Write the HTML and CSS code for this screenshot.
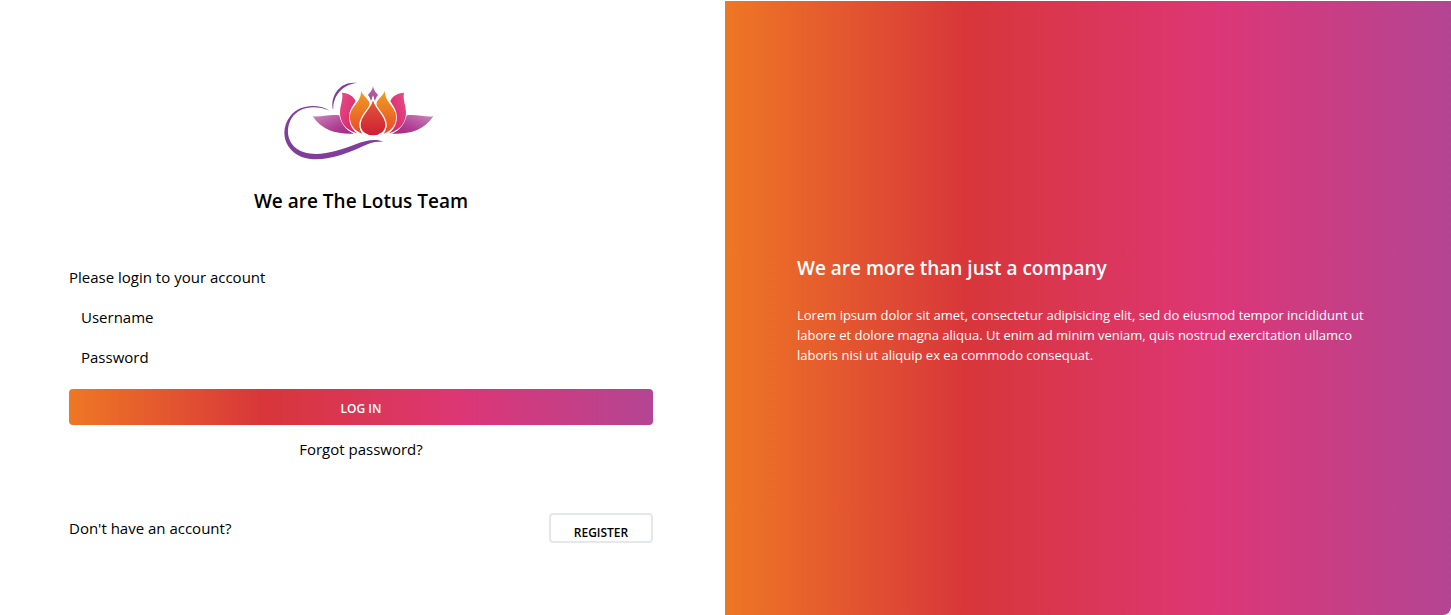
FILE: index.html
```html
<!DOCTYPE html>
<html lang="en">
<head>
<meta charset="utf-8">
<meta name="viewport" content="width=device-width, initial-scale=1">
<title>The Lotus Team</title>
<link rel="stylesheet" href="styles.css">
</head>
<body>
<main class="card">
  <section class="login">
    <header class="brand">
      <svg class="logo" viewBox="23 15 465 240" role="img" aria-label="Lotus">
        <defs>
          <linearGradient id="leaf" x1="0" y1="0" x2="1" y2="1"><stop offset="0" stop-color="#c987bd"/><stop offset=".6" stop-color="#b04094"/><stop offset="1" stop-color="#a5237f"/></linearGradient>
          <linearGradient id="pink" x1="0" y1="0" x2="1" y2="1"><stop offset="0" stop-color="#e2508a"/><stop offset="1" stop-color="#dc1c62"/></linearGradient>
          <linearGradient id="orange" x1="0" y1="0" x2="0" y2="1"><stop offset="0" stop-color="#f0a020"/><stop offset="1" stop-color="#e8492a"/></linearGradient>
          <linearGradient id="red" x1="0" y1="0" x2="0" y2="1"><stop offset="0" stop-color="#e26038"/><stop offset="1" stop-color="#d01c34"/></linearGradient>
          <linearGradient id="bud" x1="0" y1="0" x2="0" y2="1"><stop offset="0" stop-color="#bf68a9"/><stop offset="1" stop-color="#9a4b9b"/></linearGradient>
          <g id="side">
            <path fill="url(#leaf)" d="M109 121C136 124 156 114 189 118C194 144 210 164 233 173C181 175 137 164 109 121Z"/>
            <path fill="url(#pink)" d="M197 50C217 51 231 60 238 75C232 87 221 98 219 116C216 138 225 158 242 172C209 162 190 140 191 108C192 84 201 72 197 50Z"/>
            <path fill="url(#orange)" d="M254 44C258 57 273 66 279 79C281 89 280 96 272 106C259 122 250 132 250 148C250 158 253 166 258 173C235 165 219 146 221 120C223 90 256 78 254 44Z"/>
          </g>
        </defs>
        <g fill="#803d9b">
          <path d="M160 104C119 80 66 89 42 120C8 164 24 223 76 243C130 261 193 240 240 220C269 206 291 195 324 197C294 187 267 194 238 205C191 223 130 244 83 229C33 213 24 163 46 126C67 93 114 84 160 104Z"/>
          <path d="M169 98C162 58 193 14 242 21C198 25 170 61 171 98Z"/>
        </g>
        <path fill="url(#bud)" d="M290 30C293 46 300 49 305 57C300 63 297 69 296 77L290 58L284 77C283 69 280 63 275 57C280 49 287 46 290 30Z"/>
        <use href="#side"/>
        <use href="#side" transform="translate(580 0) scale(-1 1)"/>
        <path fill="url(#red)" stroke="#fff" stroke-width="4" d="M290 62C292 98 329 113 329 146C329 168 311 180 290 180C269 180 251 168 251 146C251 113 288 98 290 62Z"/>
      </svg>
      <h1 class="heading">We are The Lotus Team</h1>
    </header>
    <form class="form">
      <p class="intro">Please login to your account</p>
      <input class="field" type="text" placeholder="Username" aria-label="Username">
      <input class="field" type="password" placeholder="Password" aria-label="Password">
      <button class="submit" type="submit">LOG IN</button>
      <a class="forgot" href="#">Forgot password?</a>
    </form>
    <div class="signup">
      <p>Don't have an account?</p>
      <button class="register" type="button">REGISTER</button>
    </div>
  </section>
  <section class="about">
    <h2 class="heading">We are more than just a company</h2>
    <p class="about-text">Lorem ipsum dolor sit amet, consectetur adipisicing elit, sed do eiusmod tempor incididunt ut labore et dolore magna aliqua. Ut enim ad minim veniam, quis nostrud exercitation ullamco laboris nisi ut aliquip ex ea commodo consequat.</p>
  </section>
</main>
</body>
</html>
```
FILE: styles.css
```css
:root {
  --brand: linear-gradient(to right, #ee7724, #d8363a, #dd3675, #b44593);
}

* { box-sizing: border-box; }

body {
  margin: 0;
  padding-top: 1px;
  background: #fff;
  color: #000;
  font: 15px/24px "Open Sans", "Noto Sans", sans-serif;
}

h1, h2, p { margin: 0; }

button, input { font: inherit; color: inherit; }

.card {
  display: grid;
  grid-template-columns: 725fr 726fr;
  min-height: calc(100vh - 1px);
}

.login {
  display: flex;
  flex-direction: column;
  padding: 80px 72px 72px 69px;
}

.brand {
  display: flex;
  flex-direction: column;
  align-items: center;
  gap: 24px;
}

.logo {
  width: 155px;
  height: 80px;
}

.heading {
  padding-top: 2px;
  font-size: 19px;
  line-height: 28px;
  font-weight: 600;
}

.form {
  display: flex;
  flex-direction: column;
  margin-top: 50px;
}

.field {
  width: 100%;
  height: 24px;
  margin-top: 16px;
  padding: 0 12px;
  border: 0;
  background: transparent;
}

.field::placeholder {
  color: #000;
  opacity: 1;
}

.submit {
  height: 36px;
  margin-top: 20px;
  padding: 3px 24px 0;
  border: 0;
  border-radius: 4px;
  background: var(--brand);
  color: #fff;
  font-size: 12px;
  font-weight: 600;
}

.forgot {
  align-self: center;
  margin-top: 12px;
  color: inherit;
  text-decoration: none;
}

.signup {
  display: flex;
  align-items: center;
  justify-content: space-between;
  margin-top: 52px;
}

.register {
  width: 104px;
  height: 30px;
  padding: 9px 0 0;
  border: 2px solid #e5e7eb;
  border-radius: 4px;
  background: #fff;
  font-size: 12px;
  line-height: 16px;
  font-weight: 600;
}

.about {
  display: flex;
  flex-direction: column;
  justify-content: center;
  gap: 23px;
  padding: 0 72px;
  border-radius: 0 0 8px 0;
  background: var(--brand);
  color: #fff;
}

.about-text {
  font-size: 13px;
  line-height: 20px;
}
```
